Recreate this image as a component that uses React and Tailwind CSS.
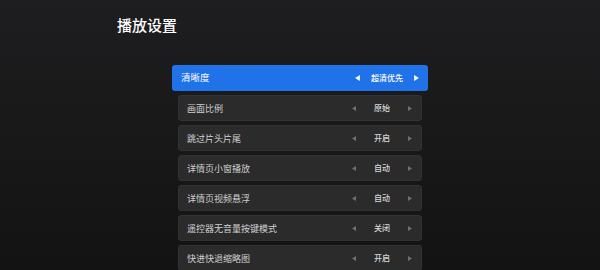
const rows = [
  { label: '清晰度', value: '超清优先', focused: true },
  { label: '画面比例', value: '原始' },
  { label: '跳过片头片尾', value: '开启' },
  { label: '详情页小窗播放', value: '自动' },
  { label: '详情页视频悬浮', value: '自动' },
  { label: '遥控器无音量按键模式', value: '关闭' },
  { label: '快进快退缩略图', value: '开启' },
];

const Arrow = ({ dir, size = 5, className }) => (
  <svg width={size - 1} height={size} viewBox="0 0 4 5" className={className}>
    {dir === 'left' ? <polygon points="4,0 4,5 0,2.5" fill="currentColor" /> : <polygon points="0,0 0,5 4,2.5" fill="currentColor" />}
  </svg>
);

const Row = ({ label, value, focused }) => {
  if (focused) {
    return (
      <div className="-mx-[6px] h-[26px] rounded-[3px] bg-[#1f72e8] flex items-center pl-[9px] pr-[9px] text-white">
        <span className="flex-1 text-[9.5px] leading-none">{label}</span>
        <div className="w-[64px] flex items-center justify-between">
          <Arrow dir="left" size={6} className="text-white" />
          <span className="text-[8px] leading-none font-medium">{value}</span>
          <Arrow dir="right" size={6} className="text-white" />
        </div>
      </div>
    );
  }
  return (
    <div className="h-[26px] rounded-[3px] bg-[#2b2b2c] border border-[#323234] flex items-center pl-[8px] pr-[9px]">
      <span className="flex-1 text-[9px] leading-none text-[#d0d0d0]">{label}</span>
      <div className="w-[60px] flex items-center justify-between">
        <Arrow dir="left" className="text-[#6f6f6f]" />
        <span className="text-[8px] leading-none font-medium text-[#d6d6d6]">{value}</span>
        <Arrow dir="right" className="text-[#6f6f6f]" />
      </div>
    </div>
  );
};

export default function App() {
  return (
    <div className="w-[600px] h-[270px] overflow-hidden bg-gradient-to-b from-[#1e1e20] to-[#131313] font-['Noto_Sans_CJK_SC',sans-serif]">
      <h1 className="pl-[117px] pt-[14px] text-[15px] leading-[22px] font-medium text-white">播放设置</h1>
      <div className="mx-auto mt-[29px] w-[244px] flex flex-col gap-[4px]">
        {rows.map((r) => (
          <Row key={r.label} {...r} />
        ))}
      </div>
    </div>
  );
}
